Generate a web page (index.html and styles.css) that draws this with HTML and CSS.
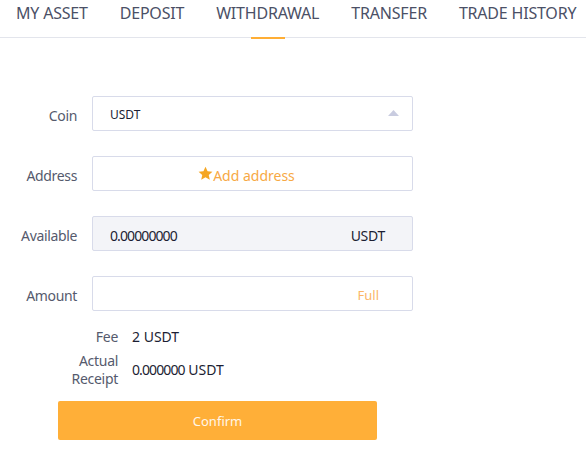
FILE: index.html
```html
<!DOCTYPE html>
<html>
<head>
<meta charset="utf-8">
<link rel="stylesheet" href="styles.css">
</head>
<body>
<nav class="tabs">
  <div class="tab">MY ASSET</div>
  <div class="tab">DEPOSIT</div>
  <div class="tab active">WITHDRAWAL</div>
  <div class="tab">TRANSFER</div>
  <div class="tab">TRADE HISTORY</div>
</nav>
<main class="form">
  <div class="row">
    <label class="label">Coin</label>
    <div class="field select">
      <span class="coin">USDT</span>
      <svg class="caret" width="11" height="6" viewBox="0 0 11 6"><path d="M5.5 0 L11 6 L0 6 Z" fill="#c9cce0"/></svg>
    </div>
  </div>
  <div class="row">
    <label class="label">Address</label>
    <div class="field address">
      <svg class="star" width="15" height="15" viewBox="0 0 24 24"><path d="M12 1l3.3 7.2 7.8.8-5.9 5.3 1.7 7.7L12 18.1l-6.9 3.9 1.7-7.7L.9 9l7.8-.8z" fill="#f5a623"/></svg>
      <span>Add address</span>
    </div>
  </div>
  <div class="row">
    <label class="label">Available</label>
    <div class="field available">
      <span class="num">0.00000000</span>
      <span class="unit">USDT</span>
    </div>
  </div>
  <div class="row">
    <label class="label">Amount</label>
    <div class="field amount">
      <span class="full">Full</span>
    </div>
  </div>
  <div class="summary">
    <div class="srow">
      <span class="slabel">Fee</span>
      <span class="svalue">2 USDT</span>
    </div>
    <div class="srow">
      <span class="slabel">Actual<br>Receipt</span>
      <span class="svalue"><span class="num">0.000000</span> USDT</span>
    </div>
    <button class="confirm">Confirm</button>
  </div>
</main>
</body>
</html>
```

FILE: styles.css
```css
* { box-sizing: border-box; }
body {
  margin: 0;
  font-family: "Noto Sans", "Open Sans", sans-serif;
  background: #fff;
}
.tabs {
  display: flex;
  border-bottom: 1px solid #e3e5ec;
  height: 38px;
}
.tab {
  position: relative;
  padding: 0 16px;
  height: 37px;
  line-height: 26px;
  font-size: 16px;
  letter-spacing: -0.2px;
  color: #4b5066;
  white-space: nowrap;
}
.tab.active::after {
  content: "";
  position: absolute;
  left: 50%;
  bottom: -2px;
  width: 34px;
  margin-left: -17px;
  height: 2px;
  background: #ffae35;
}
.form {
  padding-top: 58px;
}
.row {
  display: flex;
  align-items: center;
  margin-bottom: 25px;
}
.label {
  flex: 0 0 92px;
  padding-right: 15px;
  padding-top: 3px;
  text-align: right;
  font-size: 14px;
  letter-spacing: -0.35px;
  color: #555a6d;
}
.field {
  width: 321px;
  height: 35px;
  border: 1px solid #d8dbea;
  border-radius: 2px;
  display: flex;
  align-items: center;
  font-size: 14px;
  padding-top: 3px;
}
.select {
  padding: 2px 13px 0 17px;
  justify-content: space-between;
}
.caret { margin-top: -3px; }
.coin {
  font-size: 12px;
  color: #1c1e33;
}
.address {
  justify-content: center;
  padding-right: 12px;
  color: #f7a944;
}
.star { margin-top: -3px; }
.available {
  background: #f3f4f8;
  padding: 3px 27px 0 17px;
  justify-content: space-between;
  color: #1c1e33;
}
.unit { letter-spacing: -0.3px; }
.num { letter-spacing: -0.9px; }
.amount {
  justify-content: flex-end;
  padding-right: 33px;
}
.full {
  color: #fbb567;
  font-size: 13px;
}
.summary {
  margin-left: 58px;
  margin-top: -9px;
}
.srow {
  display: flex;
  align-items: center;
  margin-bottom: 5px;
}
.slabel {
  flex: 0 0 60px;
  margin-right: 14px;
  text-align: right;
  font-size: 14px;
  letter-spacing: -0.3px;
  line-height: 17.5px;
  color: #555a6d;
}
.svalue {
  font-size: 14px;
  line-height: 20px;
  color: #1c1e33;
}
.confirm {
  display: block;
  margin-top: 14px;
  width: 319px;
  height: 39px;
  border: none;
  border-radius: 2px;
  background: #ffaf38;
  color: #fff6e8;
  font-family: "Noto Sans", sans-serif;
  font-size: 13px;
  padding-top: 2px;
}
```
